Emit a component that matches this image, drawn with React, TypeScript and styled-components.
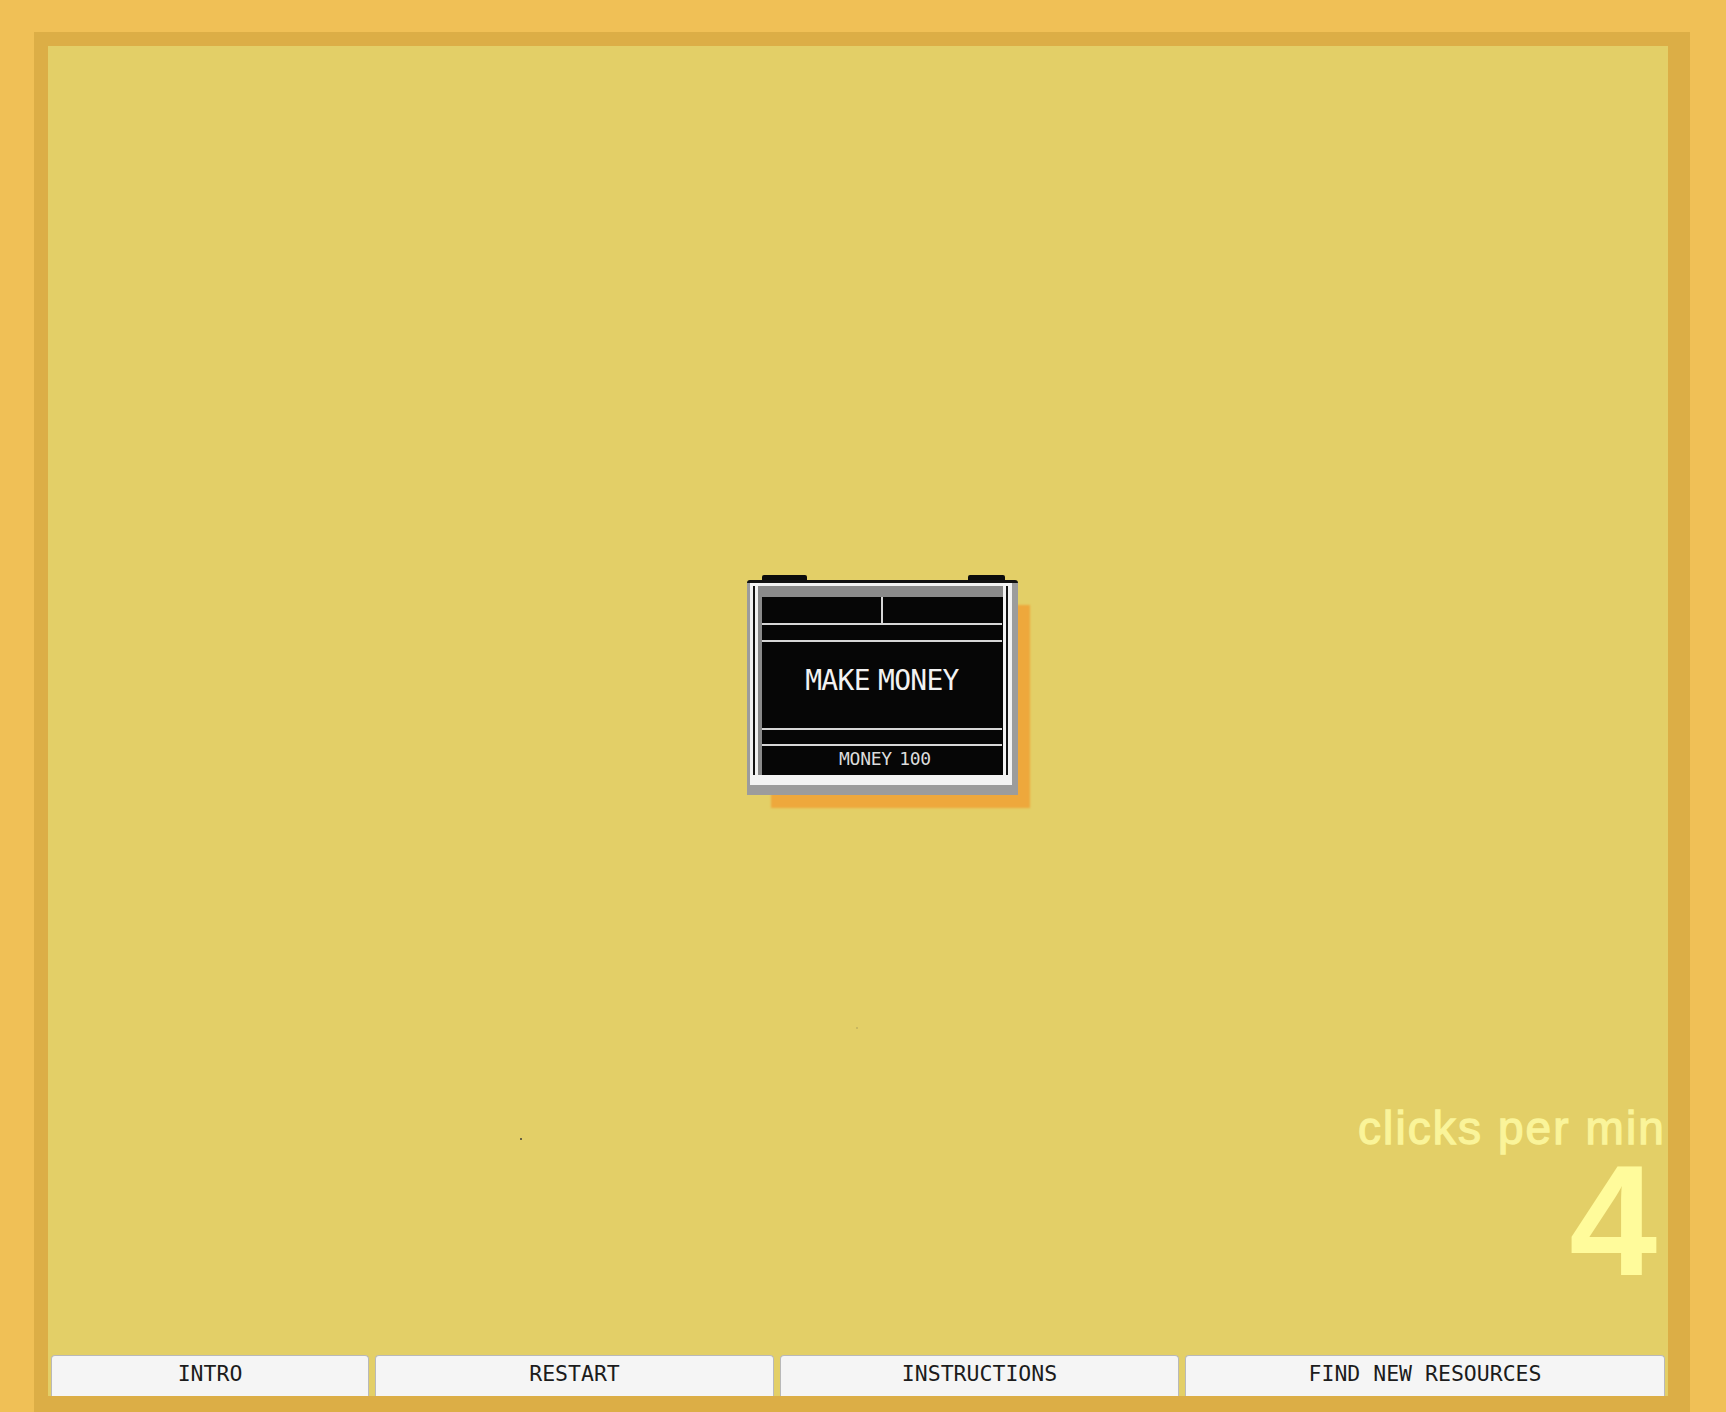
import React from "react";
import styled, { createGlobalStyle } from "styled-components";

const GlobalStyle = createGlobalStyle`
  html, body {
    margin: 0;
    padding: 0;
    background: #F0C056;
    overflow: hidden;
  }
  body {
    font-family: "Liberation Sans", Arial, sans-serif;
  }
  * { box-sizing: border-box; }
`;

const Frame = styled.div`
  margin: 32px 0 0 34px;
  width: 1656px;
  height: 1380px;
  border-style: solid;
  border-color: #DCAE46;
  border-width: 14px 22px 16px 14px;
  background: #E3CF67;
`;

const Stage = styled.main`
  position: relative;
  height: 100%;
  display: flex;
  flex-direction: column;
  justify-content: flex-end;
  overflow: hidden;
`;

const Card = styled.button<{ $x: number; $y: number }>`
  position: absolute;
  left: ${(p) => p.$x}px;
  top: ${(p) => p.$y}px;
  width: 271px;
  padding: 0;
  border: 0;
  background: none;
  display: flex;
  flex-direction: column;
  cursor: pointer;
`;

const TabRow = styled.div`
  display: flex;
  justify-content: space-between;
  height: 5px;
  padding: 0 13px 0 15px;
`;

const Tab = styled.span<{ $w: number }>`
  display: block;
  width: ${(p) => p.$w}px;
  height: 5px;
  background: #0b0b0b;
  border-radius: 2px 2px 0 0;
`;

const Bezel = styled.div`
  background: #9c9c9c;
  border-top: 3px solid #111;
  border-radius: 3px 3px 0 0;
  padding: 0 6px 10px 3px;
  box-shadow: 18px 19px 2px -6px #EEA83C;
`;

const Rim = styled.div`
  background: #f3f3f3;
  padding: 3px 4px 10px 3px;
`;

const Groove = styled.div`
  border-left: 2px solid #151515;
  border-right: 2px solid #151515;
`;

const Edge = styled.div`
  border-left: 3px solid #f3f3f3;
  border-right: 3px solid #f3f3f3;
`;

const Screen = styled.div`
  background: #060606;
  border-top: 11px solid #8a8a8a;
  border-left: 4px solid #8a8a8a;
  display: flex;
  flex-direction: column;
  height: 189px;
`;

const Band = styled.div<{ $h: number; $rule?: boolean }>`
  height: ${(p) => p.$h + (p.$rule ? 2 : 0)}px;
  border-bottom: ${(p) => (p.$rule ? "2px solid #d6d6d6" : "none")};
  margin-right: 1px;
  display: flex;
  justify-content: center;
  align-items: flex-start;
`;

const SplitBand = styled.div`
  height: 28px;
  border-bottom: 2px solid #d6d6d6;
  margin-right: 1px;
  display: grid;
  grid-template-columns: 1fr 2px 1fr;
`;

const Divider = styled.span`
  display: block;
  background: #d6d6d6;
`;

const Title = styled.span`
  font-family: "DejaVu Sans Mono", monospace;
  font-size: 28px;
  line-height: 28px;
  letter-spacing: -0.7px;
  word-spacing: -8px;
  color: #f2f2f2;
  padding-top: 25px;
  white-space: nowrap;
`;

const Balance = styled.span`
  font-family: "DejaVu Sans Mono", monospace;
  font-size: 18px;
  line-height: 18px;
  letter-spacing: -0.3px;
  word-spacing: -3px;
  color: #dcdcdc;
  padding: 4px 0 0 6px;
  white-space: nowrap;
`;

const Speck = styled.span<{ $x: number; $y: number; $o: number }>`
  position: absolute;
  left: ${(p) => p.$x}px;
  top: ${(p) => p.$y}px;
  width: 2px;
  height: 2px;
  background: #333;
  opacity: ${(p) => p.$o};
`;

const Stats = styled.div`
  align-self: flex-end;
  display: flex;
  flex-direction: column;
  align-items: flex-end;
  padding-right: 2px;
  margin-bottom: 67px;
  font-family: "Liberation Sans", Arial, sans-serif;
`;

const StatLabel = styled.div`
  font-size: 46px;
  line-height: 48px;
  letter-spacing: 2.1px;
  font-weight: 400;
  color: #FAF49A;
  -webkit-text-stroke: 1.3px #FAF49A;
  white-space: nowrap;
`;

const StatValue = styled.div`
  font-size: 158px;
  line-height: 136px;
  font-weight: 700;
  margin-right: 9px;
  color: #FFFB9B;
`;

const Toolbar = styled.nav`
  display: flex;
  gap: 6px;
  padding: 0 3px;
  height: 41px;
`;

const ToolButton = styled.button<{ $w: number }>`
  flex: 0 0 ${(p) => p.$w}px;
  height: 41px;
  background: #F5F5F5;
  border: 1px solid #b9b9b9;
  border-bottom: none;
  border-radius: 4px 4px 0 0;
  font-family: "DejaVu Sans Mono", monospace;
  font-size: 21.5px;
  line-height: 25px;
  color: #1c1c1c;
  padding: 5px 0 0;
  display: flex;
  justify-content: center;
  align-items: flex-start;
  white-space: pre;
  cursor: pointer;
`;

const buttons = [
  { label: "INTRO", w: 318 },
  { label: "RESTART", w: 399 },
  { label: "INSTRUCTIONS", w: 399 },
  { label: "FIND NEW RESOURCES", w: 480 },
];

export default function App() {
  return (
    <>
      <GlobalStyle />
      <Frame>
        <Stage>
          <Card $x={699} $y={529}>
            <TabRow>
              <Tab $w={45} />
              <Tab $w={37} />
            </TabRow>
            <Bezel>
              <Rim>
                <Groove>
                  <Edge>
                    <Screen>
                      <SplitBand>
                        <span />
                        <Divider />
                        <span />
                      </SplitBand>
                      <Band $h={15} $rule />
                      <Band $h={86} $rule>
                        <Title>MAKE MONEY</Title>
                      </Band>
                      <Band $h={14} $rule />
                      <Band $h={29}>
                        <Balance>MONEY 100</Balance>
                      </Band>
                    </Screen>
                  </Edge>
                </Groove>
              </Rim>
            </Bezel>
          </Card>
          <Speck $x={472} $y={1092} $o={0.7} />
          <Speck $x={808} $y={981} $o={0.15} />
          <Stats>
            <StatLabel>clicks per min</StatLabel>
            <StatValue>4</StatValue>
          </Stats>
          <Toolbar>
            {buttons.map((b) => (
              <ToolButton key={b.label} $w={b.w}>
                {b.label}
              </ToolButton>
            ))}
          </Toolbar>
        </Stage>
      </Frame>
    </>
  );
}
